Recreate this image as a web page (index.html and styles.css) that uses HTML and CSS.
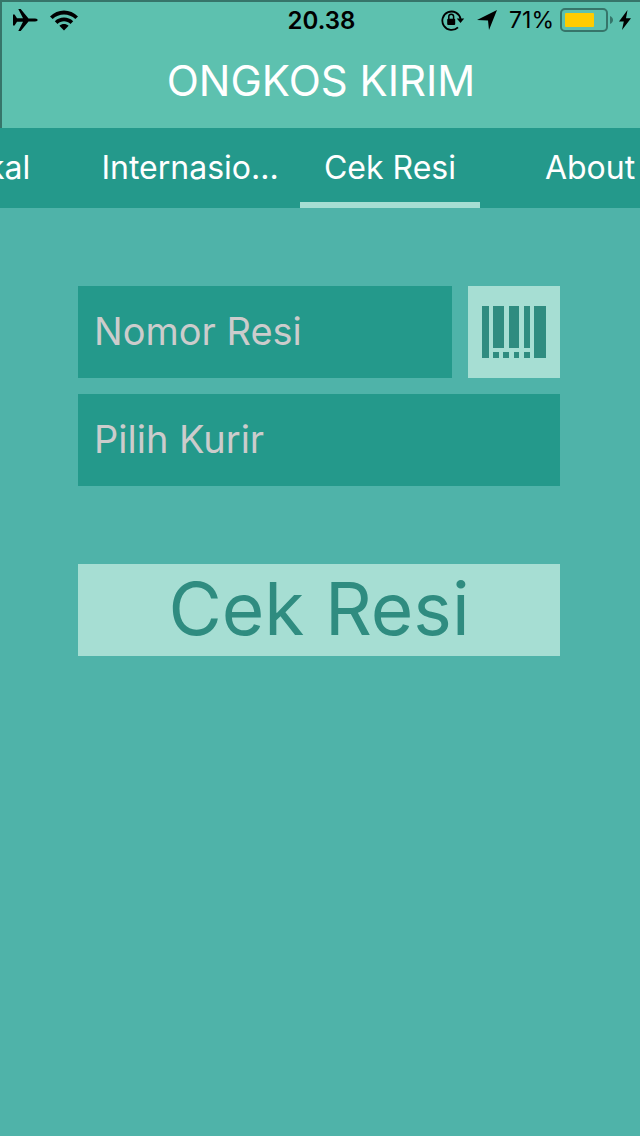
FILE: index.html
```html
<!DOCTYPE html>
<html lang="id">
<head>
<meta charset="utf-8">
<meta name="viewport" content="width=device-width, initial-scale=1">
<title>Ongkos Kirim</title>
<link rel="stylesheet" href="styles.css">
</head>
<body>
<header class="header">
  <div class="status">
    <div class="status-side">
      <svg class="plane" width="26" height="24" viewBox="0 0 26 24" aria-hidden="true"><path d="M1 6.500h1.600L5 10.200l6 .1L6.300 1h2.400l7.800 9.400 6.500.2c2 .1 2.600.8 2.600 1.400s-.6 1.300-2.600 1.400l-6.500.2L8.700 23H6.300L11 13.700l-6 .1-2.400 3.700H1z"/></svg>
      <svg width="28" height="21" viewBox="0 0 28 21" aria-hidden="true"><path d="M0 6.400C7.500-1.600 20.500-1.600 28 6.400L25.300 9.100C19.300 2.900 8.700 2.900 2.700 9.100z"/><path d="M4.800 11.200c5-5 13.400-5 18.400 0l-2.700 2.700c-3.500-3.500-9.500-3.500-13 0z"/><path d="M9.400 15.800c2.500-2.500 6.700-2.500 9.200 0L14 20.400z"/></svg>
    </div>
    <time class="clock">20.38</time>
    <div class="status-side status-right">
      <svg width="24" height="22" viewBox="0 0 24 22" aria-hidden="true"><path d="M17 18.300A9.200 9.200 0 1 1 19.600 10" fill="none" stroke="#000" stroke-width="1.800"/><path d="M15.800 9.600h7.400l-3.700 4.400z"/><rect x="6.200" y="9.800" width="8" height="6.200" rx="1"/><path d="M7.800 10V7.600a2.400 2.400 0 0 1 4.800 0V10" fill="none" stroke="#000" stroke-width="1.500"/></svg>
      <svg class="arrow" width="20" height="20" viewBox="0 0 20 20" aria-hidden="true"><path d="M20 0 12 20 11 10.500 0 10z"/></svg>
      <span class="percent">71%</span>
      <svg class="battery" width="54" height="24" viewBox="0 0 54 24" aria-hidden="true"><rect x="1" y="1" width="46" height="22" rx="4" fill="none" stroke="#36756a" stroke-width="2"/><rect x="5" y="5" width="29" height="14" rx="1" fill="#fc0"/><path d="M50 8c4 1.500 4 6.500 0 8z" fill="#36756a"/></svg>
      <svg width="12" height="20" viewBox="0 0 12 20" aria-hidden="true"><path d="M8.500 0 0 11.500h4.800L3 20l9-11.800H7z"/></svg>
    </div>
  </div>
  <h1 class="title">ONGKOS KIRIM</h1>
</header>
<nav class="tabs" aria-label="Menu">
  <div class="tab-list">
    <a class="tab" href="#lokal">Lokal</a>
    <a class="tab" href="#internasional">Internasio...</a>
    <a class="tab tab-active" href="#resi" aria-current="page">Cek Resi</a>
    <a class="tab" href="#about">About</a>
  </div>
</nav>
<main class="content" id="resi">
  <form class="form">
    <div class="row">
      <input class="field" type="text" placeholder="Nomor Resi" aria-label="Nomor Resi">
      <button class="scan" type="button" aria-label="Pindai barcode">
        <svg width="64" height="52" viewBox="0 0 64 52" aria-hidden="true"><path d="M0 0h7v52H0zM11 0h11v42H11zM27 0h10v42H27zM42 0h6v42h-6zM52 0h12v52H52zM11 46h6v6h-6zM21 46h6v6h-6zM32 46h5v6h-5zM42 46h6v6h-6z"/></svg>
      </button>
    </div>
    <select class="field" aria-label="Pilih Kurir">
      <option>Pilih Kurir</option>
    </select>
    <button class="submit" type="button">Cek Resi</button>
  </form>
</main>
</body>
</html>
```
FILE: styles.css
```css
* {
  box-sizing: border-box;
}

body {
  margin: 0;
  min-height: 100vh;
  background: #4fb3a9;
  font-family: Inter, "Liberation Sans", sans-serif;
}

.header {
  height: 128px;
  background: #5dc1af;
  border-top: 2px solid #36756a;
  border-left: 2px solid #36756a;
}

.status {
  display: grid;
  grid-template-columns: 1fr auto 1fr;
  align-items: center;
  height: 36px;
  padding: 0 9px 0 10px;
  font-size: 24px;
}

.status-side {
  display: flex;
  align-items: center;
  gap: 12px;
}

.status-right {
  justify-content: flex-end;
}

.clock {
  font-weight: 600;
}

.percent {
  margin-right: -6px;
  font-size: 23px;
}

.battery {
  margin-right: -7px;
}

.title {
  margin: 0;
  padding-top: 18px;
  color: #fff;
  font-size: 42px;
  font-weight: 400;
  line-height: 50px;
  text-align: center;
}

.tabs {
  overflow: hidden;
  background: #24998b;
}

.tab-list {
  display: flex;
  gap: 20px;
  margin-left: -100px;
}

.tab {
  flex: 0 0 180px;
  height: 80px;
  border-bottom: 6px solid transparent;
  color: #fff;
  font-size: 32px;
  line-height: 80px;
  text-align: center;
  text-decoration: none;
  white-space: nowrap;
}

.tab-active {
  border-color: #a6ded3;
}

.content {
  padding: 78px 80px 78px 78px;
}

.form {
  display: flex;
  flex-direction: column;
  gap: 16px;
}

.row {
  display: flex;
  gap: 16px;
}

.field {
  flex: 1 1 auto;
  min-width: 0;
  height: 92px;
  padding: 0 16px 2px;
  border: 0;
  border-radius: 0;
  appearance: none;
  background: #24998b;
  color: #ccc;
  font-family: inherit;
  font-size: 38px;
}

.field::placeholder {
  color: #ccc;
}

.scan {
  display: flex;
  flex: 0 0 92px;
  align-items: center;
  justify-content: center;
  padding: 0;
  border: 0;
  background: #a6ded3;
  fill: #2f8c80;
}

.submit {
  height: 92px;
  margin-top: 62px;
  padding: 0 0 2px;
  border: 0;
  background: #a6ded3;
  color: #2f8c80;
  font-family: inherit;
  font-size: 73px;
  line-height: 88px;
}
```
